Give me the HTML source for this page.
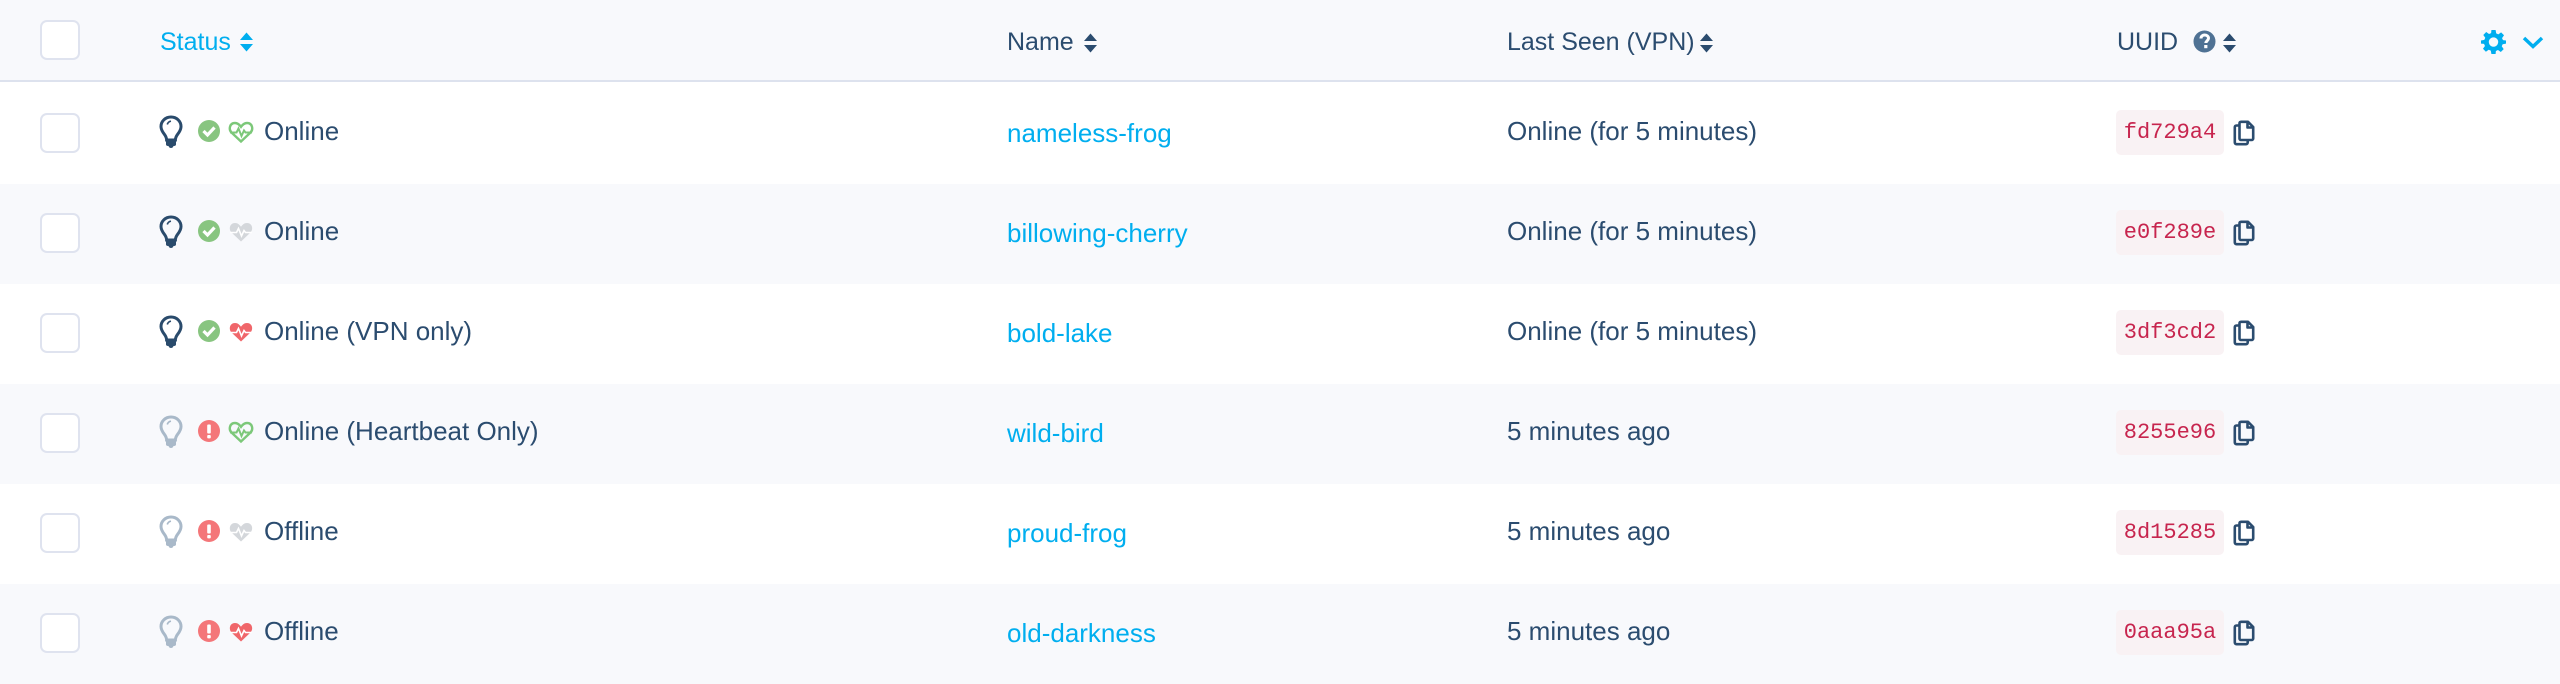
<!DOCTYPE html>
<html><head><meta charset="utf-8"><style>
*{margin:0;padding:0;box-sizing:border-box}
body{width:2560px;height:684px;overflow:hidden;background:#fff;font-family:"Liberation Sans",sans-serif;color:#2b4c6f;font-size:26px;position:relative}
.hdr{position:absolute;left:0;top:0;width:2560px;height:82px;background:#f8f9fc;border-bottom:2px solid #dde2ee}
.row{position:absolute;left:0;width:2560px;height:100px}
.g{background:#f8f9fc}
.cb{position:absolute;left:40px;width:40px;height:40px;border:2px solid #dfe3ef;border-radius:7px;background:#fff}
.t{position:absolute;line-height:30px;white-space:nowrap}
.lnk{color:#00aeef}
.code{position:absolute;left:2116px;width:108px;height:45px;background:#f9f2f4;border-radius:5px;color:#c7254e;font-family:"Liberation Mono",monospace;font-size:22px;line-height:45px;text-align:center}
svg{position:absolute}
</style></head><body>
<div class="hdr">
 <div class="cb" style="top:20px"></div>
 <div class="t" style="left:160px;top:27px;color:#00aeef;font-size:25px">Status</div>
 <svg style="left:239px;top:31px" width="15" height="22" viewBox="0 0 15 22"><path d="M1 9L7.5 1.5L14 9Z M1 13L7.5 20.5L14 13Z" fill="#00aeef"/></svg>
 <div class="t" style="left:1007px;top:27px;font-size:25px">Name</div>
 <svg style="left:1083px;top:32px" width="15" height="22" viewBox="0 0 15 22"><path d="M1 9L7.5 1.5L14 9Z M1 13L7.5 20.5L14 13Z" fill="#2b4c6f"/></svg>
 <div class="t" style="left:1507px;top:27px;font-size:25px">Last Seen (VPN)</div>
 <svg style="left:1699px;top:32px" width="15" height="22" viewBox="0 0 15 22"><path d="M1 9L7.5 1.5L14 9Z M1 13L7.5 20.5L14 13Z" fill="#2b4c6f"/></svg>
 <div class="t" style="left:2117px;top:27px;font-size:25px">UUID</div>
 <svg style="left:2193px;top:30px" width="23" height="23" viewBox="0 0 23 23"><circle cx="11.5" cy="11.5" r="11" fill="#4f7294"/><path d="M8 8.5C8 6 10 5 11.7 5C14 5 15.5 6.4 15.5 8.3C15.5 10.5 12.8 11 12.8 13" stroke="#fff" stroke-width="3" fill="none"/><rect x="11.2" y="15" width="3.2" height="3.2" fill="#fff"/></svg>
 <svg style="left:2222px;top:32px" width="15" height="22" viewBox="0 0 15 22"><path d="M1 9L7.5 1.5L14 9Z M1 13L7.5 20.5L14 13Z" fill="#2b4c6f"/></svg>
 <svg style="left:2481px;top:29px" width="25" height="25" viewBox="0 0 24 24"><path fill="#00aeef" fill-rule="evenodd" d="M10 1h4l.6 3.2 2 .9 2.7-1.9 2.8 2.8-1.9 2.7.9 2L24 11v3l-3.2.6-.9 2 1.9 2.7-2.8 2.8-2.7-1.9-2 .9L14 24h-4l-.6-3.2-2-.9-2.7 1.9-2.8-2.8 1.9-2.7-.9-2L0 14v-3l3.2-.6.9-2L2.2 5.7 5 2.9l2.7 1.9 2-.9z M12 8a4.5 4.5 0 1 0 0.01 0z"/></svg>
 <svg style="left:2522px;top:36px" width="22" height="13" viewBox="0 0 22 13"><path d="M2 2L11 10.5L20 2" stroke="#00aeef" stroke-width="3.5" fill="none"/></svg>
</div>

<div id="rows"></div>
<script>
const data=[
 [1,1,'go','Online','nameless-frog','Online (for 5 minutes)','fd729a4'],
 [1,1,'gf','Online','billowing-cherry','Online (for 5 minutes)','e0f289e'],
 [1,1,'rf','Online (VPN only)','bold-lake','Online (for 5 minutes)','3df3cd2'],
 [0,0,'go','Online (Heartbeat Only)','wild-bird','5 minutes ago','8255e96'],
 [0,0,'gf','Offline','proud-frog','5 minutes ago','8d15285'],
 [0,0,'rf','Offline','old-darkness','5 minutes ago','0aaa95a']];
let h='';
data.forEach((d,i)=>{
 const top=84+i*100;
 const bc=d[0]?'#2a4b6c':'#a9b9c9';
 let heart;
 const hp='M13 21.5L3.5 12.5C0.5 9.5 1.5 3 7 3C9.8 3 11.6 4.8 13 6.8C14.4 4.8 16.2 3 19 3C24.5 3 25.5 9.5 22.5 12.5Z';
 const pl='M2 12.5H8.5L10.5 8.5L13.5 16L16 10.5L17.5 12.5H24';
 if(d[2]=='go') heart=`<path d="${hp}" fill="none" stroke="#7cc879" stroke-width="2.4"/><path d="${pl}" fill="none" stroke="#7cc879" stroke-width="2"/>`;
 else { const c=d[2]=='gf'?'#d4d7db':'#f0666a'; heart=`<path d="${hp}" fill="${c}"/><path d="${pl}" fill="none" stroke="#fff" stroke-width="1.6"/>`;}
 const st=d[1]?`<circle cx="11" cy="11" r="11" fill="#88c580"/><path d="M5.5 11L9.5 15L16.5 7.5" stroke="#fff" stroke-width="3.2" fill="none"/>`
   :`<circle cx="11" cy="11" r="11" fill="#f47679"/><rect x="9.2" y="4.5" width="3.6" height="9" rx="1" fill="#fff"/><rect x="9.2" y="15" width="3.6" height="3.4" rx="1" fill="#fff"/>`;
 h+=`<div class="row ${i%2?'g':''}" style="top:${top}px">
 <div class="cb" style="top:29px"></div>
 <svg style="left:159px;top:31px" width="24" height="34" viewBox="0 0 24 34"><path d="M12 2C6.3 2 2 6.3 2 11.5C2 14.8 3.6 17 5.3 19.2C6.8 21.2 7.6 22.8 7.6 25H16.4C16.4 22.8 17.2 21.2 18.7 19.2C20.4 17 22 14.8 22 11.5C22 6.3 17.7 2 12 2Z" fill="none" stroke="${bc}" stroke-width="3"/><path d="M8.3 9.5A4.5 4.5 0 0 1 12 6.2" stroke="${bc}" stroke-width="1.6" fill="none"/><path d="M7 25H17V29.5C17 30.5 16 31 15 31H14.5C14 32.5 13 33 12 33C11 33 10 32.5 9.5 31H9C8 31 7 30.5 7 29.5Z" fill="${bc}"/></svg>
 <svg style="left:198px;top:36px" width="22" height="22" viewBox="0 0 22 22">${st}</svg>
 <svg style="left:228px;top:36px" width="26" height="24" viewBox="0 0 26 24">${heart}</svg>
 <div class="t" style="left:264px;top:32px">${d[3]}</div>
 <div class="t lnk" style="left:1007px;top:34px">${d[4]}</div>
 <div class="t" style="left:1507px;top:32px">${d[5]}</div>
 <div class="code" style="top:26px">${d[6]}</div>
 <svg style="left:2233px;top:36px" width="22" height="26" viewBox="0 0 22 26"><path d="M6.5 5.5H3.5C2.5 5.5 1.8 6.2 1.8 7.2V22.5C1.8 23.5 2.5 24.2 3.5 24.2H13C14 24.2 14.7 23.5 14.7 22.5V20" fill="none" stroke="#2b4c6f" stroke-width="2.6"/><path d="M8 1.8H15L20.2 7V18.5C20.2 19.4 19.5 20 18.6 20H8C7.1 20 6.5 19.4 6.5 18.5V3.3C6.5 2.4 7.1 1.8 8 1.8Z M14.5 2V7.5H20" fill="none" stroke="#2b4c6f" stroke-width="2.6" stroke-linejoin="round"/></svg>
 </div>`;
});
document.getElementById('rows').innerHTML=h;
</script>
</body></html>
